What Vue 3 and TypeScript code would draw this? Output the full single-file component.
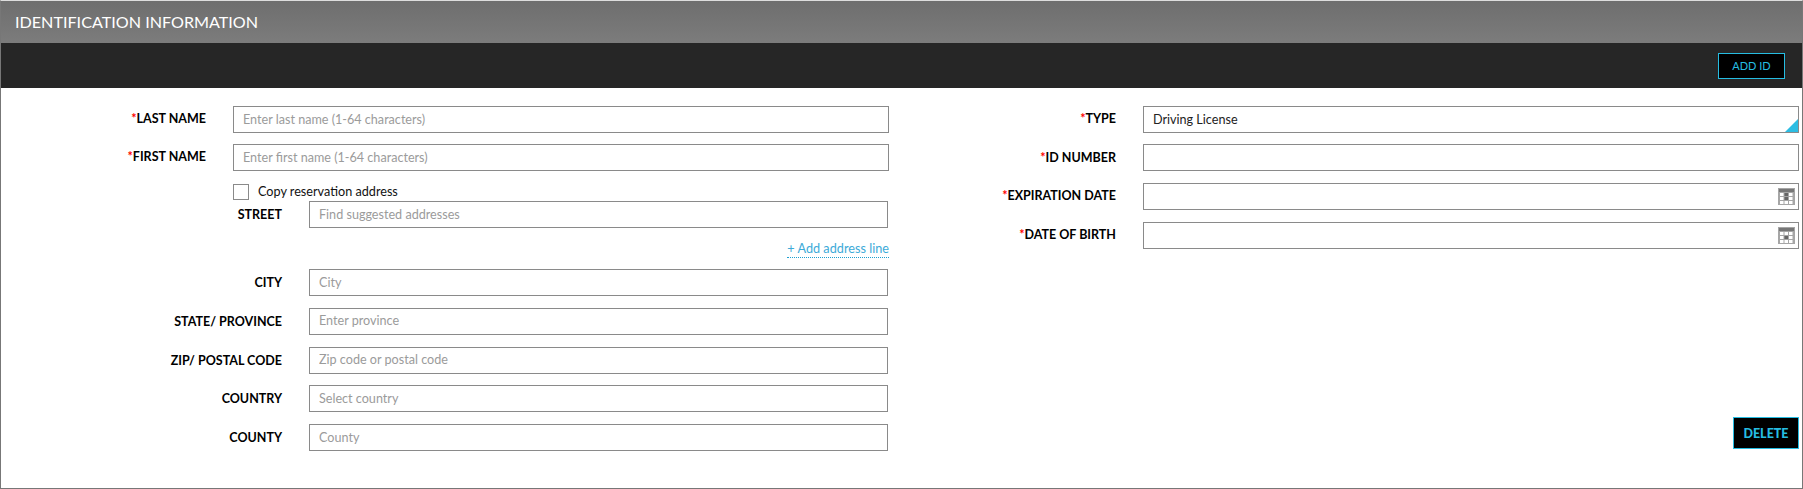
<script setup lang="ts">
interface Field {
  label: string
  placeholder?: string
}

const nameFields: Field[] = [
  { label: 'LAST NAME', placeholder: 'Enter last name (1-64 characters)' },
  { label: 'FIRST NAME', placeholder: 'Enter first name (1-64 characters)' },
]

const addressFields: Field[] = [
  { label: 'CITY', placeholder: 'City' },
  { label: 'STATE/ PROVINCE', placeholder: 'Enter province' },
  { label: 'ZIP/ POSTAL CODE', placeholder: 'Zip code or postal code' },
  { label: 'COUNTRY', placeholder: 'Select country' },
  { label: 'COUNTY', placeholder: 'County' },
]

const dateFields = [
  { label: 'EXPIRATION DATE', today: [5, 9] },
  { label: 'DATE OF BIRTH', today: [9] },
]
const calCols = [2, 6.5, 11]
const calRows = [5, 9, 13]
</script>

<template>
  <section class="panel">
    <header class="title-bar">IDENTIFICATION INFORMATION</header>
    <div class="action-bar">
      <button class="btn add-btn" type="button">ADD ID</button>
    </div>

    <div class="body">
      <div class="col col-left">
        <div v-for="f in nameFields" :key="f.label" class="row name-row">
          <label class="label name-label"><span class="req">*</span>{{ f.label }}</label>
          <input class="input" :placeholder="f.placeholder" />
        </div>

        <div class="copy-row">
          <span class="checkbox" />
          <span class="copy-text">Copy reservation address</span>
        </div>

        <div class="address">
          <div class="row">
            <label class="label addr-label">STREET</label>
            <input class="input" placeholder="Find suggested addresses" />
          </div>
          <div class="add-line-row">
            <a class="add-line">+ Add address line</a>
          </div>
          <div v-for="f in addressFields" :key="f.label" class="row addr-row">
            <label class="label addr-label">{{ f.label }}</label>
            <input class="input" :placeholder="f.placeholder" />
          </div>
        </div>
      </div>

      <div class="col col-right">
        <div class="row type-row">
          <label class="label right-label"><span class="req">*</span>TYPE</label>
          <div class="select-box">
            <span class="select-value">Driving License</span>
            <span class="corner" />
          </div>
        </div>
        <div class="row right-row">
          <label class="label right-label id-label"><span class="req">*</span>ID NUMBER</label>
          <input class="input" />
        </div>
        <div v-for="d in dateFields" :key="d.label" class="row right-row">
          <label class="label right-label"><span class="req">*</span>{{ d.label }}</label>
          <div class="date-box">
            <svg class="cal" width="17" height="17" viewBox="0 0 17 17">
              <rect width="17" height="17" fill="#a6a6a6" />
              <rect x="1" y="1" width="15" height="3" fill="#777" />
              <template v-for="y in calRows" :key="y">
                <rect
                  v-for="x in calCols"
                  :key="x"
                  :x="x"
                  :y="y"
                  width="3.5"
                  height="3"
                  :fill="x === 6.5 && d.today.includes(y) ? '#666' : '#fff'"
                />
              </template>
            </svg>
          </div>
        </div>
        <div class="delete-row">
          <button class="btn delete-btn" type="button">DELETE</button>
        </div>
      </div>
    </div>
  </section>
</template>

<style>
html,
body {
  margin: 0;
  background: #fff;
}
</style>

<style scoped>
.panel {
  box-sizing: border-box;
  width: 1803px;
  height: 489px;
  border: 1px solid #777;
  border-top-color: #ddd;
  font-family: Lato, 'Open Sans', sans-serif;
  display: flex;
  flex-direction: column;
  background: #fff;
}

.title-bar {
  height: 42px;
  line-height: 42px;
  padding-left: 14px;
  font-size: 16.15px;
  color: #fff;
  background: linear-gradient(#6e6e6e, #7c7c7c);
}

.action-bar {
  height: 45px;
  background: #262626;
  display: flex;
  align-items: center;
  justify-content: flex-end;
  padding-right: 17px;
}

.btn {
  box-sizing: border-box;
  background: #000;
  border: 1px solid #26bde2;
  color: #26bde2;
  font-family: inherit;
  padding: 0;
  cursor: pointer;
}

.add-btn {
  width: 67px;
  height: 26px;
  font-size: 11px;
}

.body {
  flex: 1;
  display: flex;
  padding-top: 18px;
}

.col {
  display: flex;
  flex-direction: column;
}

.col-left {
  width: 888px;
  flex: none;
}

.col-right {
  flex: 1;
  padding-right: 3px;
}

.row {
  display: flex;
  align-items: center;
}

.label {
  flex: none;
  text-align: right;
  font-size: 12.5px;
  font-weight: 700;
  color: #000;
}

.req {
  color: #f00;
}

.input {
  box-sizing: border-box;
  flex: 1;
  min-width: 0;
  height: 27px;
  border: 1px solid #8a8a8a;
  border-radius: 0;
  outline: none;
  padding: 0 9px 1px;
  font-family: inherit;
  font-size: 12.6px;
  color: #222;
  background: #fff;
}

.input::placeholder {
  color: #9b9b9b;
  opacity: 1;
}

.name-row {
  margin-bottom: 11px;
}

.name-label {
  width: 205px;
  margin-right: 27px;
  padding-bottom: 2px;
}

.copy-row {
  display: flex;
  align-items: center;
  margin-left: 232px;
  margin-top: 2px;
  height: 16px;
}

.checkbox {
  box-sizing: border-box;
  width: 16px;
  height: 16px;
  border: 1px solid #8a8a8a;
}

.copy-text {
  margin-left: 9px;
  padding-bottom: 1px;
  font-size: 12.65px;
  color: #111;
}

.address {
  margin-top: 1px;
  padding-right: 1px;
}

.addr-label {
  width: 281px;
  margin-right: 27px;
}

.addr-row {
  margin-bottom: 11.75px;
}

.add-line-row {
  display: flex;
  justify-content: flex-end;
  height: 41px;
  margin-right: -1px;
  padding-top: 12px;
  box-sizing: border-box;
}

.add-line {
  font-size: 12.7px;
  line-height: 16px;
  height: 17px;
  color: #3daad8;
  border-bottom: 1px dotted #1e9fd0;
  cursor: pointer;
}

.right-label {
  width: 227px;
  margin-right: 27px;
  padding-bottom: 2px;
}

.id-label {
  padding-bottom: 0;
}

.type-row {
  margin-bottom: 11px;
}

.right-row {
  margin-bottom: 12px;
}

.select-box,
.date-box {
  box-sizing: border-box;
  flex: 1;
  height: 27px;
  border: 1px solid #8a8a8a;
  position: relative;
  display: flex;
  align-items: center;
}

.select-value {
  padding: 0 0 1px 9px;
  font-size: 12.6px;
  color: #222;
}

.corner {
  position: absolute;
  right: 0;
  bottom: 0;
  border-style: solid;
  border-width: 0 0 13px 13px;
  border-color: transparent transparent #2cbde3 transparent;
}

.date-box {
  justify-content: flex-end;
  padding-right: 3px;
}

.delete-row {
  display: flex;
  justify-content: flex-end;
  margin-top: 156px;
}

.delete-btn {
  width: 66px;
  height: 32px;
  font-size: 12.5px;
  font-weight: 900;
}
</style>
